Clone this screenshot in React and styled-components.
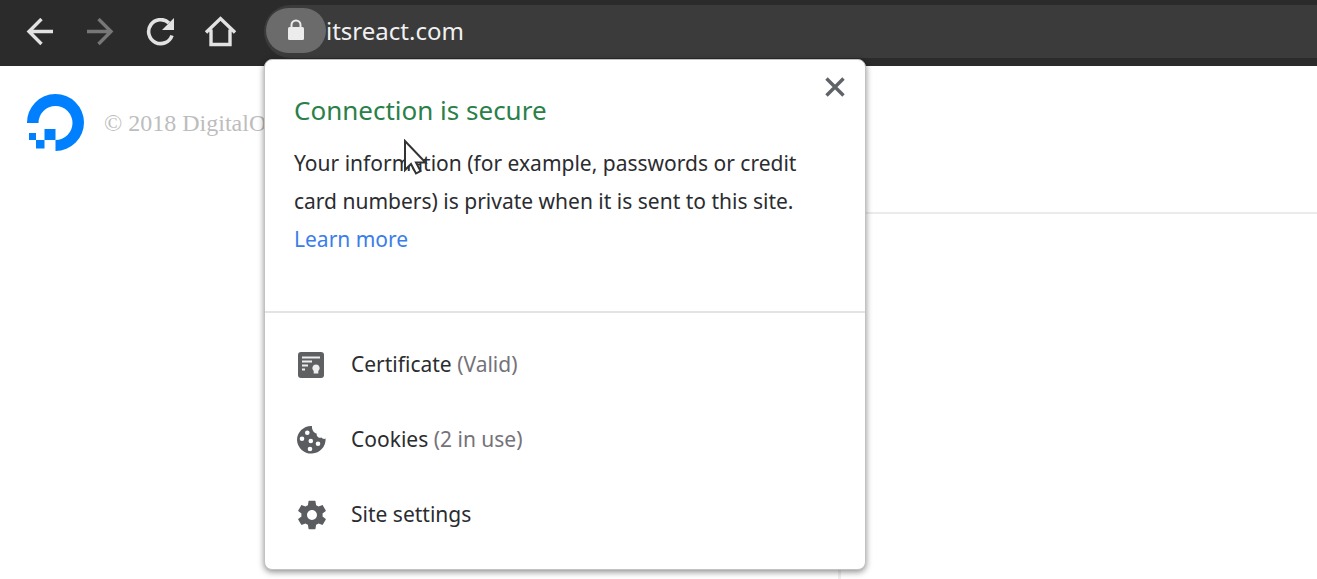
import React from "react";
import styled, { createGlobalStyle } from "styled-components";

const GlobalStyle = createGlobalStyle`
  *, *::before, *::after { box-sizing: border-box; }
  body {
    margin: 0;
    background: #fff;
    color: #2b2c30;
    font-family: "Noto Sans", "Open Sans", sans-serif;
    font-size: 21px;
  }
  button { font: inherit; color: inherit; border: 0; background: none; padding: 0; cursor: default; }
  svg { display: block; flex: none; }
`;

const Browser = styled.div`
  display: flex;
  flex-direction: column;
  min-height: 100vh;
`;

const Toolbar = styled.header`
  display: flex;
  height: 66px;
  padding: 5px 0 8px 20px;
  background: #2b2b2b;
`;

const Nav = styled.nav`
  display: flex;
  align-items: center;
  gap: 20px;
  margin-right: 24px;
`;

const NavButton = styled.button`
  display: grid;
  place-items: center;
  width: 40px;
  height: 40px;
  color: ${(p) => (p.disabled ? "#777" : "#e2e2e2")};
`;

const Omnibox = styled.div`
  position: relative;
  display: flex;
  align-items: center;
  flex: 1;
  min-width: 0;
  padding-bottom: 2px;
  border-radius: 27px 0 0 27px;
  background: #3b3b3b;
`;

const SiteButton = styled.button`
  display: grid;
  place-items: center;
  width: 60px;
  height: 45px;
  margin-left: 2px;
  border-radius: 23px;
  background: #6b6b6b;
  color: #ececec;
`;

const Address = styled.input`
  flex: 1;
  min-width: 0;
  padding: 0;
  border: 0;
  outline: 0;
  background: transparent;
  color: #f1f1f1;
  font: inherit;
  font-size: 24px;
`;

const Popup = styled.section`
  position: absolute;
  z-index: 1;
  top: 54px;
  left: 0;
  width: 602px;
  border: 1px solid #c2c2c2;
  border-radius: 8px;
  background: #fff;
  box-shadow: 0 2px 6px rgba(0, 0, 0, 0.45);
`;

const Summary = styled.div`
  display: flex;
  align-items: flex-start;
  justify-content: space-between;
  padding: 15px 18px 53px 29px;
  border-bottom: 2px solid #e3e3e3;
`;

const Heading = styled.h1`
  margin: 16px 0 15px;
  color: #2a8049;
  font-size: 26px;
  font-weight: 400;
  line-height: 38px;
`;

const Message = styled.p`
  margin: 0;
  line-height: 38px;
  white-space: nowrap;
`;

const Link = styled.a`
  color: #3b7de9;
  text-decoration: none;
`;

const CloseButton = styled.button`
  display: grid;
  place-items: center;
  width: 24px;
  height: 24px;
  color: #5f6368;
`;

const List = styled.ul`
  margin: 0;
  padding: 14px 0 17px;
  list-style: none;
`;

const Row = styled.button`
  display: flex;
  align-items: center;
  gap: 24px;
  width: 100%;
  height: 75px;
  padding-left: 30px;
  text-align: left;
`;

const Label = styled.span`
  padding-bottom: 2px;
`;

const Muted = styled.span`
  color: #75727a;
`;

const Page = styled.main`
  display: grid;
  grid-template-columns: 300px 1fr;
  flex: 1;
`;

const Brand = styled.div`
  display: flex;
  align-items: center;
  align-self: start;
  gap: 20px;
  padding: 28px 0 0 26px;
  color: #bdbdbd;
  font-family: "Liberation Serif", serif;
  font-size: 24px;
  white-space: nowrap;
`;

const Content = styled.div`
  display: flex;
  flex-direction: column;
`;

const Banner = styled.div`
  height: 148px;
  border-bottom: 2px solid #ebebeb;
`;

const Columns = styled.div`
  display: grid;
  grid-template-columns: 541px 1fr;
  flex: 1;
`;

const Column = styled.div`
  border-right: ${(p) => (p.$ruled ? "3px solid #efefef" : "0")};
`;

const Pointer = styled.svg`
  position: absolute;
  top: 79px;
  left: 138px;
`;

const Back = () => (
  <svg width="28" height="28" viewBox="0 0 28 28" fill="none" stroke="currentColor" strokeWidth="3.400">
    <path d="M27 13.500H3M15.500 1 3 13.500 15.500 26" />
  </svg>
);

const Forward = () => (
  <svg width="28" height="28" viewBox="0 0 28 28" fill="none" stroke="currentColor" strokeWidth="3.400">
    <path d="M1 13.500h24M12.500 1 25 13.500 12.500 26" />
  </svg>
);

const Reload = () => (
  <svg width="28" height="28" viewBox="0 0 28 28">
    <path d="M26 17.500A12 12 0 1 1 23 5" fill="none" stroke="currentColor" strokeWidth="3.600" />
    <path d="M28 0v12H16z" fill="currentColor" />
  </svg>
);

const Home = () => (
  <svg width="32" height="32" viewBox="0 0 32 32" fill="none" stroke="currentColor" strokeWidth="3.400">
    <path d="M2 16.500 16.500 2.500l14.500 14M7 13.500v15h19v-15" />
  </svg>
);

const Lock = () => (
  <svg width="18" height="24" viewBox="0 0 18 24">
    <path d="M4.500 9V6a4.500 4.500 0 0 1 9 0v3" fill="none" stroke="currentColor" strokeWidth="2" />
    <rect x="1" y="8" width="16" height="13" rx="1.500" fill="currentColor" />
  </svg>
);

const Logo = () => (
  <svg width="58" height="58" viewBox="0 0 58 58" fill="#0080ff">
    <path d="M29.500 57V46A17 17 0 1 0 12.500 29H1A28.500 28.500 0 1 1 29.500 57z" />
    <path d="M18.500 35h11v11h-11zM10 46h8.500v8.500H10zM3 39h7v7H3z" />
  </svg>
);

const Close = () => (
  <svg width="20" height="20" viewBox="0 0 20 20" stroke="currentColor" strokeWidth="3.400">
    <path d="m1.500 1.500 17 17M18.500 1.500l-17 17" />
  </svg>
);

const Certificate = () => (
  <svg width="32" height="32" viewBox="0 0 32 32">
    <rect x="3" y="3" width="26" height="26" rx="3" fill="#5f6062" />
    <path d="M7 8.500h18M7 12.500h10M7 16.500h6M7 20.500h3" fill="none" stroke="#eee" strokeWidth="2" />
    <path d="M21 15.500a3.700 3.700 0 0 1 2.300 6.600V24.500h-4.600v-2.400A3.700 3.700 0 0 1 21 15.500z" fill="#eee" />
  </svg>
);

const Cookie = () => (
  <svg width="32" height="32" viewBox="0 0 32 32">
    <path
      d="M17 2C9 1.500 2 8 2 16a14.300 14.300 0 0 0 28.600-1.500c-1.400.8-3.200.4-4.200-1-2.600 1-5.200-1.200-4.700-4C18.500 9 16.500 5 17 2z"
      fill="#5a5c5f"
    />
    <g fill="#fff">
      <circle cx="12.300" cy="8.700" r="2.300" />
      <circle cx="7" cy="14.800" r="2.300" />
      <circle cx="15.800" cy="17" r="2.300" />
      <circle cx="23" cy="19.800" r="2.300" />
      <circle cx="15" cy="25" r="2.300" />
    </g>
  </svg>
);

const Gear = () => (
  <svg width="34" height="34" viewBox="0 0 24 24" fill="#5a5c5f">
    <path d="M19.430 12.980c.040-.320.070-.640.070-.980s-.030-.660-.070-.980l2.110-1.650c.190-.150.240-.420.120-.640l-2-3.460c-.120-.220-.390-.300-.610-.220l-2.490 1c-.520-.400-1.080-.730-1.690-.980l-.380-2.650C14.460 2.180 14.250 2 14 2h-4c-.250 0-.460.180-.490.420l-.380 2.650c-.610.250-1.170.590-1.690.980l-2.490-1c-.230-.090-.490 0-.610.220l-2 3.460c-.130.220-.070.490.120.640l2.110 1.650c-.040.320-.070.650-.070.980s.030.660.070.980l-2.110 1.650c-.190.150-.240.420-.120.640l2 3.460c.120.220.390.300.610.220l2.490-1c.520.400 1.080.730 1.690.980l.380 2.650c.030.240.240.420.490.420h4c.250 0 .460-.180.490-.420l.380-2.650c.610-.250 1.170-.590 1.690-.980l2.490 1c.230.090.490 0 .610-.220l2-3.460c.120-.220.070-.490-.120-.640l-2.110-1.650zM12 15.500c-1.930 0-3.500-1.570-3.500-3.500s1.570-3.500 3.500-3.500 3.500 1.570 3.500 3.500-1.570 3.500-3.500 3.500z" />
  </svg>
);

const IconSlot = styled.span`
  display: grid;
  place-items: center;
  width: 32px;
`;

export default function App() {
  return (
    <Browser>
      <GlobalStyle />
      <Toolbar>
        <Nav aria-label="Browser">
          <NavButton aria-label="Back"><Back /></NavButton>
          <NavButton aria-label="Forward" disabled><Forward /></NavButton>
          <NavButton aria-label="Reload"><Reload /></NavButton>
          <NavButton aria-label="Home"><Home /></NavButton>
        </Nav>
        <Omnibox>
          <SiteButton aria-label="View site information"><Lock /></SiteButton>
          <Address aria-label="Address" defaultValue="itsreact.com" />
          <Popup aria-labelledby="connection">
            <Summary>
              <div>
                <Heading id="connection">Connection is secure</Heading>
                <Message>
                  Your information (for example, passwords or credit
                  <br />
                  card numbers) is private when it is sent to this site.
                  <br />
                  <Link href="#learn-more">Learn more</Link>
                </Message>
              </div>
              <CloseButton aria-label="Close"><Close /></CloseButton>
            </Summary>
            <List>
              <li><Row><IconSlot><Certificate /></IconSlot><Label>Certificate <Muted>(Valid)</Muted></Label></Row></li>
              <li><Row><IconSlot><Cookie /></IconSlot><Label>Cookies <Muted>(2 in use)</Muted></Label></Row></li>
              <li><Row><IconSlot><Gear /></IconSlot><Label>Site settings</Label></Row></li>
            </List>
            <Pointer width="26" height="40" viewBox="0 0 26 40" aria-hidden="true">
              <path
                d="M2 2v29l6-6 5 9.500 4.500-2.500-4.500-8.500h9.500z"
                fill="#fff"
                stroke="#333"
                strokeWidth="2"
              />
            </Pointer>
          </Popup>
        </Omnibox>
      </Toolbar>
      <Page>
        <Brand><Logo /><span>© 2018 DigitalOcean</span></Brand>
        <Content>
          <Banner />
          <Columns>
            <Column $ruled />
            <Column />
          </Columns>
        </Content>
      </Page>
    </Browser>
  );
}
